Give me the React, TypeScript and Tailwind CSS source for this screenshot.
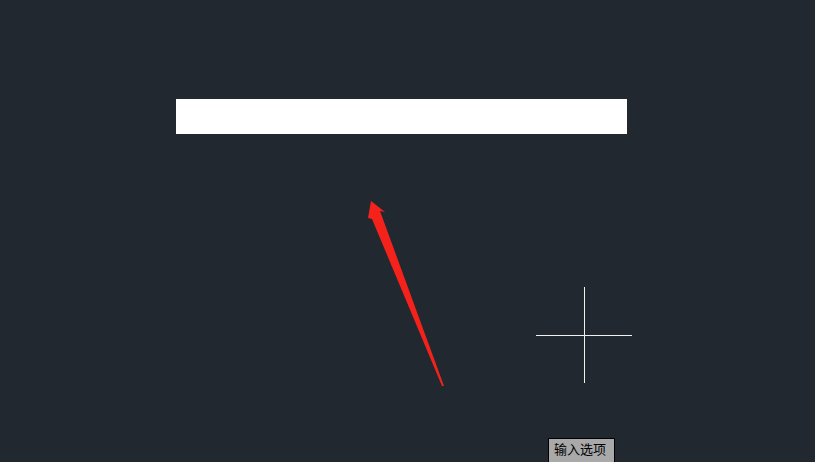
export default function App() {
  return (
    <div className="relative h-[462px] w-[815px] overflow-hidden bg-[#212830] font-['Liberation_Sans','Noto_Sans_CJK_SC',sans-serif]">
      {/* drawn object on the canvas */}
      <div className="absolute left-[176px] top-[99px] h-[35px] w-[451px] bg-white" />

      {/* annotation arrow */}
      <svg className="absolute left-0 top-0" width="815" height="462" viewBox="0 0 815 462">
        <polygon
          points="371,201 385,212 380,211 444,386 442,386 372,219 368,218"
          fill="#f5221b"
        />
      </svg>

      {/* crosshair cursor */}
      <div className="absolute left-[584px] top-[287px] h-[96px] w-px bg-[#f0f0f0]" />
      <div className="absolute left-[536px] top-[335px] h-px w-[96px] bg-[#f0f0f0]" />

      {/* dynamic input tooltip */}
      <div className="absolute left-[548px] top-[438px] h-[26px] w-[67px] border border-black bg-[#a9a9a9] pl-[5px] pt-[3px] text-[13px] leading-[16px] text-black">
        输入选项
      </div>
    </div>
  );
}
